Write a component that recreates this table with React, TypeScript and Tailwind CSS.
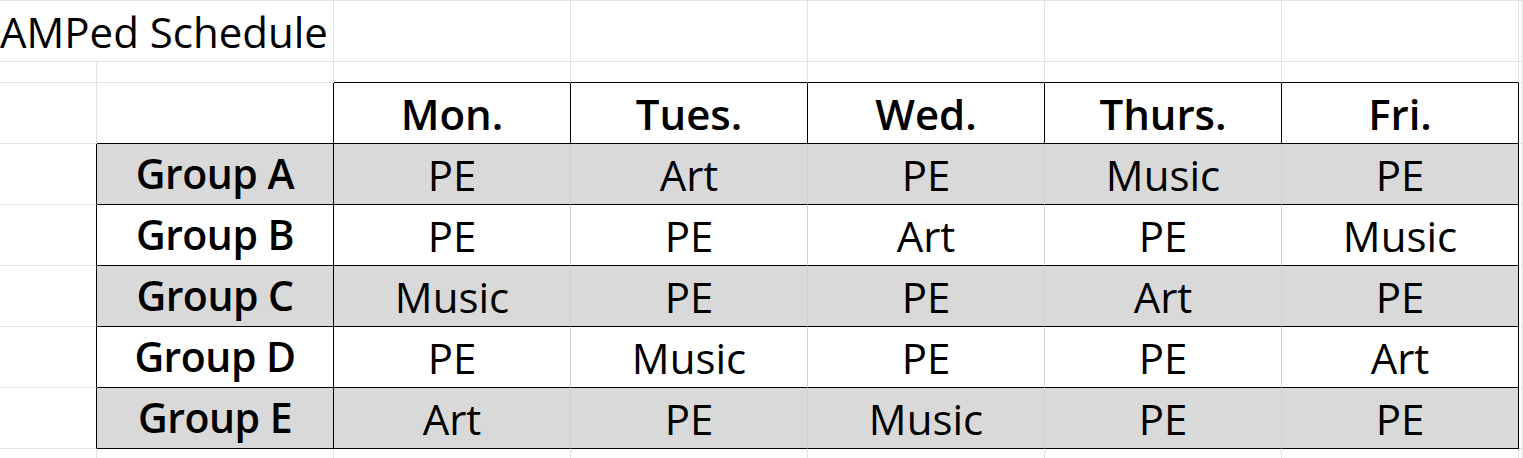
import clsx from "clsx"

const days = ["Mon.", "Tues.", "Wed.", "Thurs.", "Fri."]

const groups = [
  { name: "Group A", slots: ["PE", "Art", "PE", "Music", "PE"] },
  { name: "Group B", slots: ["PE", "PE", "Art", "PE", "Music"] },
  { name: "Group C", slots: ["Music", "PE", "PE", "Art", "PE"] },
  { name: "Group D", slots: ["PE", "Music", "PE", "PE", "Art"] },
  { name: "Group E", slots: ["Art", "PE", "Music", "PE", "PE"] },
]

const grid = "border-[#e2e2e2]"

function Cell({ className, children }: { className?: string; children?: React.ReactNode }) {
  return (
    <div className={clsx("box-border border-r border-b flex items-center justify-center shrink-0 h-full", className)}>
      {children}
    </div>
  )
}

export default function App() {
  return (
    <div
      className="w-[1523px] h-[458px] overflow-hidden bg-white text-black border-t border-[#e2e2e2]"
      style={{ fontFamily: '"Open Sans", "Noto Sans", sans-serif' }}
    >
      {/* title row */}
      <div className="flex h-[61px]">
        <Cell className={clsx("w-[334px] justify-start text-[42px] whitespace-nowrap", grid)}>AMPed Schedule</Cell>
        {days.map((d) => (
          <Cell key={d} className={clsx("w-[237px]", grid)} />
        ))}
        <Cell className={clsx("flex-1", grid)} />
      </div>

      {/* spacer row */}
      <div className="flex h-[21px]">
        <Cell className={clsx("w-[97px]", grid)} />
        <Cell className={clsx("w-[237px]", grid)} />
        {days.map((d) => (
          <Cell key={d} className="w-[237px] border-r-[#e2e2e2] border-b-black" />
        ))}
        <Cell className={clsx("flex-1", grid)} />
      </div>

      {/* header row */}
      <div className="flex h-[61px]">
        <Cell className={clsx("w-[97px]", grid)} />
        <Cell className="w-[237px] border-r-black border-b-black" />
        {days.map((d) => (
          <Cell key={d} className="w-[237px] border-black text-[42px] font-semibold">
            {d}
          </Cell>
        ))}
        <Cell className={clsx("flex-1", grid)} />
      </div>

      {/* group rows */}
      {groups.map((g, i) => (
        <div key={g.name} className="flex h-[61px]">
          <Cell className="w-[97px] border-r-black border-b-[#e2e2e2]" />
          <Cell
            className={clsx(
              "w-[237px] border-black text-[41px] font-semibold whitespace-nowrap tracking-[-0.5px]",
              i % 2 === 0 ? "bg-[#d9d9d9]" : "bg-white"
            )}
          >
            {g.name}
          </Cell>
          {g.slots.map((s, j) => (
            <Cell
              key={j}
              className={clsx(
                "w-[237px] border-b-black text-[42px]",
                j === 4 ? "border-r-black" : "border-r-[#cfcfcf]",
                i % 2 === 0 ? "bg-[#d9d9d9]" : "bg-white"
              )}
            >
              {s}
            </Cell>
          ))}
          <Cell className={clsx("flex-1", grid)} />
        </div>
      ))}

      {/* trailing row */}
      <div className="flex h-[12px]">
        <Cell className={clsx("w-[97px]", grid)} />
        <Cell className={clsx("w-[237px]", grid)} />
        {days.map((d) => (
          <Cell key={d} className={clsx("w-[237px]", grid)} />
        ))}
        <Cell className={clsx("flex-1", grid)} />
      </div>
    </div>
  )
}
